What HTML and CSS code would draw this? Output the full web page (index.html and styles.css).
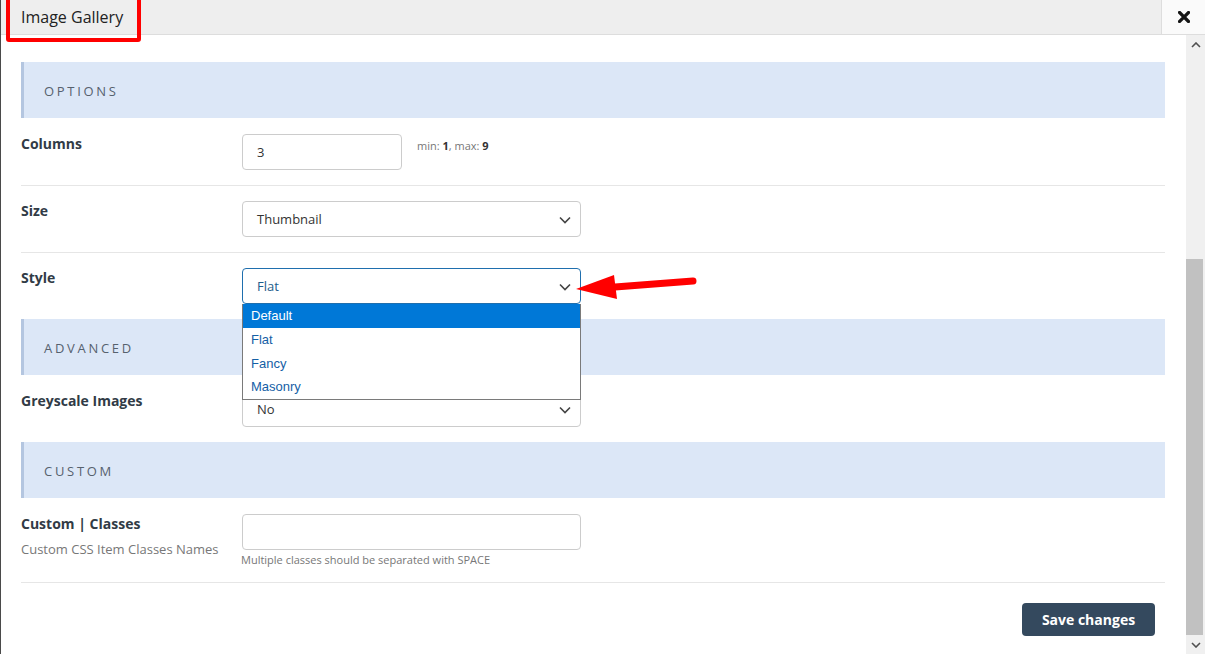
FILE: index.html
```html
<!DOCTYPE html>
<html lang="en">
<head>
<meta charset="utf-8">
<title>Image Gallery</title>
<link rel="stylesheet" href="styles.css">
</head>
<body>
<div class="window">
  <header class="topbar">
    <div class="title">Image Gallery</div>
    <div class="close"><svg viewBox="0 0 12 12" width="12" height="12"><path d="M1.5 1.5l9 9M10.5 1.5l-9 9"/></svg></div>
    <div class="annot-box"></div>
  </header>
  <div class="main">
    <div class="content">
      <section class="sec">
        <div class="sec-head">Options</div>
        <div class="row">
          <div class="label"><div class="lbl">Columns</div></div>
          <div class="field inline">
            <div class="control narrow">3</div>
            <div class="hint">min: <b>1</b>, max: <b>9</b></div>
          </div>
        </div>
        <div class="row">
          <div class="label"><div class="lbl">Size</div></div>
          <div class="field">
            <div class="control select">Thumbnail<svg class="chev" viewBox="0 0 12 8"><path d="M1 1.5l5 5 5-5"/></svg></div>
          </div>
        </div>
        <div class="row last">
          <div class="label"><div class="lbl">Style</div></div>
          <div class="field dropwrap">
            <div class="control select focused">Flat<svg class="chev" viewBox="0 0 12 8"><path d="M1 1.5l5 5 5-5"/></svg></div>
            <ul class="dropdown">
              <li class="sel">Default</li>
              <li>Flat</li>
              <li>Fancy</li>
              <li>Masonry</li>
            </ul>
          </div>
        </div>
      </section>
      <section class="sec">
        <div class="sec-head">Advanced</div>
        <div class="row last">
          <div class="label"><div class="lbl">Greyscale Images</div></div>
          <div class="field">
            <div class="control select">No<svg class="chev" viewBox="0 0 12 8"><path d="M1 1.5l5 5 5-5"/></svg></div>
          </div>
        </div>
      </section>
      <section class="sec">
        <div class="sec-head">Custom</div>
        <div class="row">
          <div class="label">
            <div class="lbl">Custom | Classes</div>
            <div class="sublbl">Custom CSS Item Classes Names</div>
          </div>
          <div class="field">
            <div class="control"></div>
            <div class="help">Multiple classes should be separated with SPACE</div>
          </div>
        </div>
      </section>
      <div class="actions">
        <div class="btn">Save changes</div>
      </div>
    </div>
    <div class="scrollbar">
      <div class="sb-btn"><svg viewBox="0 0 10 6"><path d="M1 5l4-4 4 4"/></svg></div>
      <div class="sb-track"></div>
      <div class="sb-thumb"></div>
      <div class="sb-btn"><svg viewBox="0 0 10 6"><path d="M1 1l4 4 4-4"/></svg></div>
    </div>
  </div>
  <svg class="arrow" viewBox="0 0 130 35" width="130" height="35">
    <line x1="44" y1="19" x2="122" y2="13" stroke="#f00" stroke-width="7" stroke-linecap="round"/>
    <polygon points="5,21 43,7 46,31" fill="#f00"/>
  </svg>
</div>
</body>
</html>
```

FILE: styles.css
```css
* { box-sizing: border-box; }
html, body { margin: 0; padding: 0; }
body {
  font-family: "Open Sans", "Liberation Sans", sans-serif;
  color: #333;
  background: #fff;
  width: 1205px;
  height: 654px;
  overflow: hidden;
}
.window {
  position: relative;
  width: 1205px;
  height: 654px;
  border-left: 1px solid #4a4a4a;
  display: flex;
  flex-direction: column;
}
.topbar {
  position: relative;
  height: 35px;
  flex: none;
  background: #eeeeee;
  border-bottom: 1px solid #dddddd;
  display: flex;
  align-items: stretch;
}
.title {
  flex: 1;
  padding-left: 20px;
  font-size: 16px;
  line-height: 34px;
  color: #222;
}
.close {
  width: 44px;
  background: #fafafa;
  border-left: 1px solid #dddddd;
  display: flex;
  align-items: center;
  justify-content: center;
}
.close svg {
  fill: none;
  stroke: #151515;
  stroke-width: 3.2;
  stroke-linecap: square;
}
.annot-box {
  position: absolute;
  left: 5px;
  top: -5px;
  width: 135px;
  height: 47px;
  border: 4px solid #ff0000;
  border-radius: 3px;
}
.main {
  flex: 1;
  display: flex;
  min-height: 0;
}
.content {
  flex: 1;
  padding: 27px 21px 0 20px;
  overflow: hidden;
}
.sec-head {
  height: 56px;
  background: #dce7f7;
  border-left: 3px solid #b4c6e0;
  padding-left: 20px;
  line-height: 58px;
  font-size: 13px;
  letter-spacing: 2.7px;
  text-transform: uppercase;
  color: #56616e;
  margin-bottom: 1px;
}
.row {
  display: flex;
  padding: 15px 0;
  border-bottom: 1px solid #e6e6e6;
}
.row.last { border-bottom: none; }
.label {
  width: 221px;
  flex: none;
}
.lbl {
  font-size: 14px;
  font-weight: bold;
  color: #313b46;
  line-height: 20px;
}
.sublbl {
  margin-top: 6px;
  font-size: 13px;
  color: #777;
  line-height: 18px;
}
.field { position: relative; }
.field.inline { display: flex; align-items: flex-start; }
.control {
  position: relative;
  width: 339px;
  height: 36px;
  border: 1px solid #cccccc;
  border-radius: 4px;
  padding-left: 14px;
  font-size: 13px;
  line-height: 34px;
  color: #333;
  background: #fff;
}
.control.narrow { width: 160px; }
.control.focused {
  border-color: #1f6fae;
  color: #1d5d8c;
}
.chev {
  position: absolute;
  right: 9px;
  top: 14px;
  width: 12px;
  height: 8px;
  fill: none;
  stroke: #444;
  stroke-width: 1.6;
}
.hint {
  margin-left: 15px;
  margin-top: 4px;
  font-size: 11px;
  color: #777;
}
.hint b { color: #333; }
.help {
  margin-top: 3px;
  margin-left: -1px;
  font-size: 11px;
  color: #777;
  line-height: 14px;
}
.dropdown {
  position: absolute;
  left: 0;
  top: 36px;
  width: 339px;
  margin: 0;
  padding: 0;
  list-style: none;
  background: #fff;
  border: 1px solid #7a7a7a;
  border-top: none;
  font-family: "Liberation Sans", Arial, sans-serif;
  font-size: 13px;
  z-index: 2;
}
.dropdown li {
  height: 24px;
  line-height: 24px;
  padding-left: 8px;
  color: #1560a6;
}
.dropdown li:nth-child(n+2) { height: 23.7px; }
.dropdown li.sel {
  background: #0078d7;
  color: #fff;
}
.actions {
  display: flex;
  justify-content: flex-end;
  padding: 20px 10px 0 0;
}
.btn {
  width: 133px;
  height: 33px;
  background: #34495e;
  border-radius: 4px;
  color: #fff;
  font-size: 14px;
  font-weight: bold;
  text-align: center;
  line-height: 33px;
}
.scrollbar {
  width: 19px;
  flex: none;
  background: #f0f0f0;
  display: flex;
  flex-direction: column;
}
.sb-btn {
  height: 19px;
  flex: none;
  display: flex;
  align-items: center;
  justify-content: center;
}
.sb-btn svg {
  width: 10px;
  height: 6px;
  fill: none;
  stroke: #505050;
  stroke-width: 1.6;
}
.sb-track { height: 205px; flex: none; }
.sb-thumb {
  flex: 1;
  background: #c1c1c1;
  margin: 0 2px 0 0;
}
.arrow {
  position: absolute;
  left: 570px;
  top: 268px;
}
```
